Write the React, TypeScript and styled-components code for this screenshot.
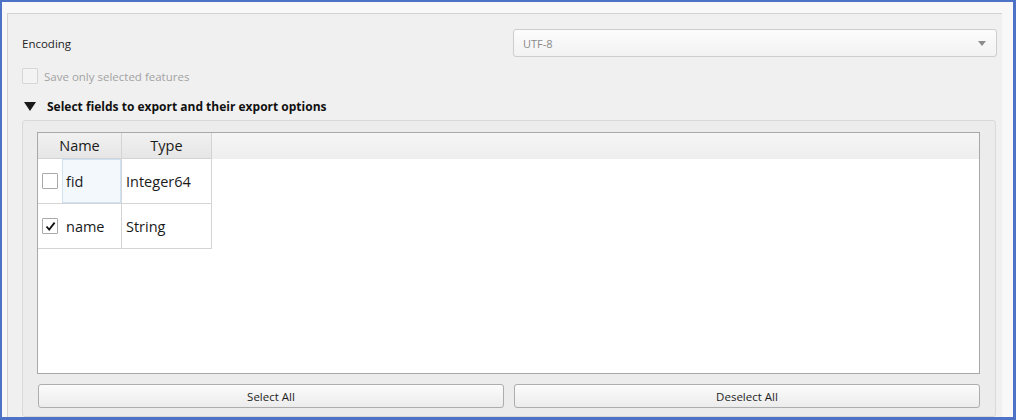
import React from "react";
import styled, { createGlobalStyle } from "styled-components";

const GlobalStyle = createGlobalStyle`
  html, body {
    margin: 0;
    padding: 0;
    background: #ffffff;
  }
  * {
    box-sizing: border-box;
  }
`;

const Frame = styled.div`
  width: 1016px;
  height: 420px;
  overflow: hidden;
  display: flex;
  border-style: solid;
  border-color: #4d72c6;
  border-width: 2px 3px 3px 2px;
  background: #f8f8f8;
  padding: 11px 11px 0 5px;
  font-family: "Open Sans", "Liberation Sans", sans-serif;
`;

const Panel = styled.div`
  flex: 1;
  display: flex;
  flex-direction: column;
  background: #f0f0f0;
  border-top: 1px solid #d2d2d2;
  border-left: 1px solid #d2d2d2;
  padding: 15px 5px 0 14px;
`;

const FieldRow = styled.div`
  display: flex;
  align-items: center;
  height: 28px;
`;

const Label = styled.div`
  flex: 0 0 491px;
  font-size: 11.5px;
  color: #1e1e1e;
`;

const Combo = styled.div`
  flex: 1;
  height: 28px;
  display: flex;
  align-items: center;
  justify-content: space-between;
  padding: 0 10px 0 9px;
  border: 1px solid #cdcdcd;
  border-radius: 3px;
  background: linear-gradient(#fcfcfc, #f2f2f2);
  font-size: 11px;
  color: #8a8a8a;
`;

const CheckRow = styled.label<{ $disabled?: boolean }>`
  display: flex;
  align-items: center;
  gap: 6px;
  margin-top: 11px;
  height: 17px;
  font-size: 11.5px;
  color: ${(p) => (p.$disabled ? "#a3a3a3" : "#1e1e1e")};
`;

const Box = styled.span<{ $size: number; $disabled?: boolean }>`
  display: inline-flex;
  align-items: center;
  justify-content: center;
  flex: 0 0 ${(p) => p.$size}px;
  width: ${(p) => p.$size}px;
  height: ${(p) => p.$size}px;
  border: 1px solid ${(p) => (p.$disabled ? "#d6d6d6" : "#a9a9a9")};
  background: ${(p) => (p.$disabled ? "#f3f3f3" : "#ffffff")};
  border-radius: 1px;
`;

const SectionHeader = styled.div`
  display: flex;
  align-items: center;
  gap: 11px;
  margin-top: 14px;
  padding-left: 2px;
  height: 18px;
  font-size: 12px;
  font-weight: 700;
  color: #111111;
`;

const GroupBox = styled.div`
  margin-top: 5px;
  height: 320px;
  margin-right: 1px;
  display: flex;
  flex-direction: column;
  border: 1px solid #d9d9d9;
  border-radius: 3px;
  background: #ececec;
  padding: 11px 15px 0 14px;
`;

const Table = styled.div`
  height: 242px;
  background: #ffffff;
  border: 1px solid #a8a8a8;
  display: flex;
  flex-direction: column;
`;

const HeaderBand = styled.div`
  display: flex;
  height: 26px;
  background: linear-gradient(#f6f6f6, #eeeeee);
`;

const HeaderCell = styled.div<{ $w: number }>`
  width: ${(p) => p.$w}px;
  display: flex;
  align-items: center;
  justify-content: center;
  font-size: 14.5px;
  color: #1a1a1a;
  background: linear-gradient(#f1f1f1, #e6e6e6);
  border-right: 1px solid #d4d4d4;
  border-bottom: 1px solid #d4d4d4;
`;

const Row = styled.div`
  display: flex;
  height: 45px;
`;

const Cell = styled.div<{ $w: number }>`
  width: ${(p) => p.$w}px;
  display: flex;
  align-items: center;
  padding-left: 4px;
  font-size: 14.5px;
  color: #1a1a1a;
  border-right: 1px solid #d4d4d4;
  border-bottom: 1px solid #d4d4d4;
`;

const NameText = styled.span<{ $focus?: boolean }>`
  align-self: stretch;
  flex: 1;
  display: flex;
  align-items: center;
  margin-left: 4px;
  padding-left: 3px;
  border: 1px solid ${(p) => (p.$focus ? "#cfe2f5" : "transparent")};
  background: ${(p) => (p.$focus ? "#f3f8fd" : "transparent")};
`;

const ButtonRow = styled.div`
  display: flex;
  gap: 10px;
  margin-top: 10px;
  padding-left: 1px;
`;

const Button = styled.button`
  flex: 1;
  height: 24px;
  border: 1px solid #adadad;
  border-radius: 3px;
  background: linear-gradient(#fbfbfb, #ececec);
  font-family: "Open Sans", "Liberation Sans", sans-serif;
  font-size: 11.5px;
  color: #1e1e1e;
  padding: 0;
`;

const Check = () => (
  <svg width="11" height="11" viewBox="0 0 11 11">
    <path d="M1.5 5.5 L4.2 8.6 L9.6 1.6" fill="none" stroke="#111" strokeWidth="1.8" />
  </svg>
);

const fields = [
  { name: "fid", type: "Integer64", checked: false, focus: true },
  { name: "name", type: "String", checked: true, focus: false },
];

export default function App() {
  return (
    <>
      <GlobalStyle />
      <Frame>
        <Panel>
          <FieldRow>
            <Label>Encoding</Label>
            <Combo>
              <span>UTF-8</span>
              <svg width="8" height="5" viewBox="0 0 8 5">
                <polygon points="0,0 8,0 4,5" fill="#8c8c8c" />
              </svg>
            </Combo>
          </FieldRow>
          <CheckRow $disabled>
            <Box $size={16} $disabled />
            Save only selected features
          </CheckRow>
          <SectionHeader>
            <svg width="12" height="9" viewBox="0 0 12 9">
              <polygon points="0,0 12,0 6,9" fill="#1a1a1a" />
            </svg>
            Select fields to export and their export options
          </SectionHeader>
          <GroupBox>
            <Table>
              <HeaderBand>
                <HeaderCell $w={84}>Name</HeaderCell>
                <HeaderCell $w={90}>Type</HeaderCell>
              </HeaderBand>
              {fields.map((f) => (
                <Row key={f.name}>
                  <Cell $w={84}>
                    <Box $size={16}>{f.checked && <Check />}</Box>
                    <NameText $focus={f.focus}>{f.name}</NameText>
                  </Cell>
                  <Cell $w={90}>{f.type}</Cell>
                </Row>
              ))}
            </Table>
            <ButtonRow>
              <Button>Select All</Button>
              <Button>Deselect All</Button>
            </ButtonRow>
          </GroupBox>
        </Panel>
      </Frame>
    </>
  );
}
